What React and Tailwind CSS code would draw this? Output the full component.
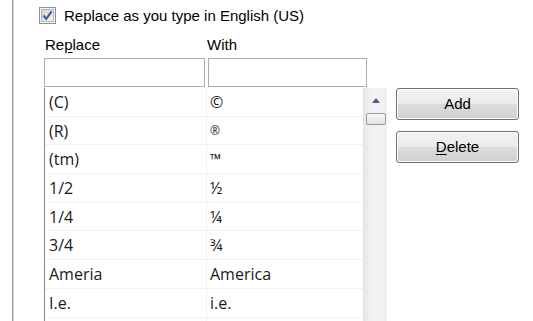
import React from "react";

const rows = [
  ["(C)", "©"],
  ["(R)", "®"],
  ["(tm)", "™"],
  ["1/2", "½"],
  ["1/4", "¼"],
  ["3/4", "¾"],
  ["Ameria", "America"],
  ["I.e.", "i.e."],
  ["", ""],
];

function Checkbox() {
  return (
    <svg width="17" height="17" viewBox="0 0 17 17" className="shrink-0">
      <defs>
        <linearGradient id="cbg" x1="0" y1="0" x2="1" y2="1">
          <stop offset="0" stopColor="#cbcfd5" />
          <stop offset="1" stopColor="#f6f6f6" />
        </linearGradient>
      </defs>
      <rect x="0.5" y="0.5" width="16" height="16" fill="#f4f4f4" stroke="#8e8f8f" />
      <rect x="2.5" y="2.5" width="12" height="12" fill="url(#cbg)" stroke="#b5b8bd" />
      <path d="M4.5 8.5 L7.3 11.8 L12.6 4.3" fill="none" stroke="#3d5a98" strokeWidth="2" />
    </svg>
  );
}

function Button({ children }) {
  return (
    <div className="flex h-[32px] w-[123px] items-center justify-center rounded-[3px] border border-[#707070] bg-[linear-gradient(#f2f2f2,#ebebeb_50%,#dddddd_50%,#cfcfcf)] text-[15px] text-black shadow-[inset_0_0_0_1px_#fcfcfc]">
      {children}
    </div>
  );
}

export default function App() {
  return (
    <div
      className="flex h-[321px] w-[533px] overflow-hidden bg-white text-black"
      style={{ fontFamily: '"Liberation Sans", Arial, sans-serif' }}
    >
      <div className="w-[12px] shrink-0" />
      <div className="w-px shrink-0 bg-[#9c9c9c]" />
      <div className="w-px shrink-0 bg-[#d8d8d8]" />
      <div className="flex flex-1 flex-col pl-[25px] pt-[7px]">
        <div className="flex h-[17px] items-center">
          <Checkbox />
          <span className="ml-[8px] text-[15px] leading-[17px]">
            Replace as you type in English (US)
          </span>
        </div>
        <div className="ml-[5px] mt-[2px] flex">
          <div className="flex w-[343px] flex-col">
            <div className="mt-[10px] flex h-[18px] text-[15px] leading-[18px]">
              <div className="w-[163px] pl-px">
                Re<span className="underline underline-offset-2">p</span>lace
              </div>
              <div>With</div>
            </div>
            <div className="mt-[4px] flex h-[29px] gap-[3px]">
              <div className="w-[161px] border border-[#abadb3] bg-white" />
              <div className="w-[159px] border border-[#abadb3] bg-white" />
            </div>
            <div
              className="mt-px flex border-l border-[#828790]"
              style={{ fontFamily: '"Open Sans", "Segoe UI", sans-serif' }}
            >
              <div className="flex w-[318px] flex-col">
                {rows.map(([a, b], i) => (
                  <div
                    key={i}
                    className="flex h-[28.7px] shrink-0 border-b border-[#eef1f6] text-[16px] leading-[28px] text-[#1a1a1a]"
                  >
                    <div className="w-[162px] shrink-0 border-r border-[#eef1f6] pl-[4px]">{a}</div>
                    <div
                      className={
                        i === 1
                          ? "pl-[3px] text-[12px]"
                          : i === 2
                          ? "pl-[3px] text-[15px]"
                          : "pl-[3px]"
                      }
                    >
                      {b}
                    </div>
                  </div>
                ))}
              </div>
              <div className="relative flex h-[262px] w-[24px] flex-col items-center border-l border-[#e3e3e3] bg-[linear-gradient(90deg,#e8e8e8,#f3f3f3_40%,#f0f0f0)]">
                <svg width="8" height="5" viewBox="0 0 8 5" className="mt-[10px]">
                  <path d="M0 5 L4 0 L8 5 Z" fill="#4d5d80" />
                </svg>
                <div className="mt-[10px] h-[12px] w-[20px] rounded-[2px] border border-[#9a9a9a] bg-[linear-gradient(#f6f6f6,#e4e4e4)]" />
              </div>
            </div>
          </div>
          <div className="ml-[9px] mt-[62px] flex flex-col gap-[11px]">
            <Button>Add</Button>
            <Button>
              <span>
                <span className="underline underline-offset-2">D</span>elete
              </span>
            </Button>
          </div>
        </div>
      </div>
    </div>
  );
}
